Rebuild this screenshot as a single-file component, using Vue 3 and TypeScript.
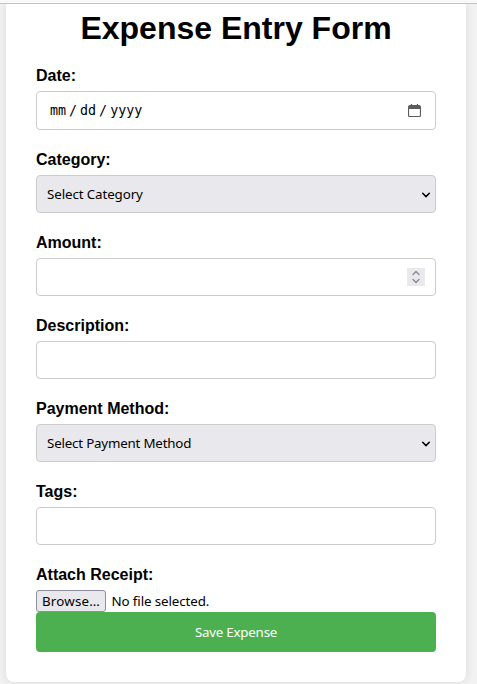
<script setup lang="ts">
import { reactive } from 'vue'

interface Field {
  id: 'category' | 'amount' | 'description' | 'payment' | 'tags'
  label: string
  kind: 'select' | 'number' | 'text'
  placeholder?: string
}

const fields: Field[] = [
  { id: 'category', label: 'Category:', kind: 'select', placeholder: 'Select Category' },
  { id: 'amount', label: 'Amount:', kind: 'number' },
  { id: 'description', label: 'Description:', kind: 'text' },
  { id: 'payment', label: 'Payment Method:', kind: 'select', placeholder: 'Select Payment Method' },
  { id: 'tags', label: 'Tags:', kind: 'text' },
]

const values = reactive<Record<Field['id'], string>>({
  category: '',
  amount: '',
  description: '',
  payment: '',
  tags: '',
})

function step(delta: number) {
  values.amount = String((Number(values.amount) || 0) + delta)
}
</script>

<template>
  <div class="page">
    <div class="topbar"></div>
    <form class="card" @submit.prevent>
      <h1>Expense Entry Form</h1>

      <div class="field">
        <label>Date:</label>
        <div class="control date">
          <span class="segments"><span>mm</span><i>/</i><span>dd</span><i>/</i><span>yyyy</span></span>
          <svg class="calendar" width="13" height="14" viewBox="0 0 13 14">
            <path d="M2 1h9a2 2 0 0 1 2 2v8.500a1.500 1.500 0 0 1-1.500 1.500h-10A1.500 1.500 0 0 1 0 11.500V3a2 2 0 0 1 2-2zM1.100 5v6.300q0 .7.7.7h9.400q.7 0 .7-.7V5z" fill="#5b5b60" fill-rule="evenodd" />
            <path d="M3.500 0v2M9.500 0v2" stroke="#5b5b60" stroke-width="1.200" />
          </svg>
        </div>
      </div>

      <div v-for="field in fields" :key="field.id" class="field">
        <label :for="field.id">{{ field.label }}</label>
        <div class="control" :class="field.kind">
          <select v-if="field.kind === 'select'" :id="field.id" v-model="values[field.id]" :class="field.id">
            <option value="">{{ field.placeholder }}</option>
          </select>
          <input v-else :id="field.id" v-model="values[field.id]" type="text" />
          <svg v-if="field.kind === 'select'" class="chevron" width="10" height="6" viewBox="0 0 10 6">
            <path d="M1.700 1.300L5 4.600l3.300-3.300" fill="none" stroke="#000" stroke-width="1.500" stroke-linecap="round" stroke-linejoin="round" />
          </svg>
          <span v-if="field.kind === 'number'" class="spinner">
            <svg width="18" height="9" viewBox="0 0 18 9" @click="step(1)">
              <path d="M6 6.500l3-3 3 3" />
            </svg>
            <svg width="18" height="9" viewBox="0 0 18 9" @click="step(-1)">
              <path d="M6 2.500l3 3 3-3" />
            </svg>
          </span>
        </div>
      </div>

      <div class="attachment">
        <label>Attach Receipt:</label>
        <div class="file">
          <button type="button" class="browse"><span>Browse…</span></button>
          <span class="filename">No file selected.</span>
        </div>
      </div>
      <button type="submit" class="save"><span>Save Expense</span></button>
    </form>
  </div>
</template>

<style>
body {
  background: #f2f2f2;
}
</style>

<style scoped>
.page {
  height: 684px;
  overflow: hidden;
  box-sizing: border-box;
  background: #f2f2f2;
  color: #000;
  font-family: "Liberation Sans", Arial, sans-serif;
}

.topbar {
  position: relative;
  height: 3px;
  background: #f9f9f9;
  border-bottom: 1px solid #c3c3c3;
}

.card {
  width: 460px;
  height: 678px;
  margin-left: 6px;
  padding: 6px 30px 30px;
  box-sizing: border-box;
  background: #fff;
  border-radius: 0 0 8px 8px;
  box-shadow: 0 0 10px rgba(0, 0, 0, 0.1);
}

h1 {
  margin: 0 0 21px;
  font-size: 32px;
  line-height: 36px;
  text-align: center;
}

label {
  display: block;
  margin-bottom: 6px;
  font-size: 16px;
  line-height: 18px;
  font-weight: bold;
}

.field {
  margin-bottom: 21px;
}

.control {
  display: flex;
  align-items: center;
  height: 38px;
  box-sizing: border-box;
  border: 1px solid #ccc;
  border-radius: 4px;
  background: #fff;
}

.control.date {
  height: 39px;
  padding: 0 14px 0 13px;
  justify-content: space-between;
}

.segments {
  display: flex;
  font: 13.333px/16px "DejaVu Sans Mono", monospace;
}

.segments i {
  width: 14px;
  text-align: center;
  font-style: normal;
}

.control.select {
  background: #e9e9ed;
  padding-right: 4px;
}

.chevron {
  margin-top: 2px;
}

select,
input {
  flex: 1;
  min-width: 0;
  height: 36px;
  padding: 0 10px;
  border: 0;
  outline: 0;
  appearance: none;
  background: transparent;
  color: #000;
  font: 13.333px "Noto Sans", sans-serif;
  letter-spacing: -0.1px;
}

select.payment {
  letter-spacing: -0.19px;
}

.spinner {
  display: flex;
  flex-direction: column;
  margin-right: 10px;
  background: #e9e9ed;
}

.spinner path {
  fill: none;
  stroke: #8f8f9d;
  stroke-width: 1.5;
  stroke-linecap: round;
  stroke-linejoin: round;
}

.file {
  display: flex;
  align-items: center;
  height: 22px;
  gap: 5.5px;
  font: 13.333px/18px "Noto Sans", sans-serif;
}

.filename {
  letter-spacing: -0.1px;
}

.browse {
  width: 70px;
  height: 22px;
  padding: 0;
  box-sizing: border-box;
  border: 1px solid #8f8f9d;
  border-radius: 3px;
  background: #e9e9ed;
  color: #000;
  font: inherit;
  letter-spacing: 0.2px;
}

.save {
  display: block;
  width: 100%;
  height: 40px;
  padding: 0;
  border: 0;
  border-radius: 4px;
  background: #4caf50;
  color: #fff;
  font: 13.333px/18px "Noto Sans", sans-serif;
  letter-spacing: -0.22px;
}
</style>
